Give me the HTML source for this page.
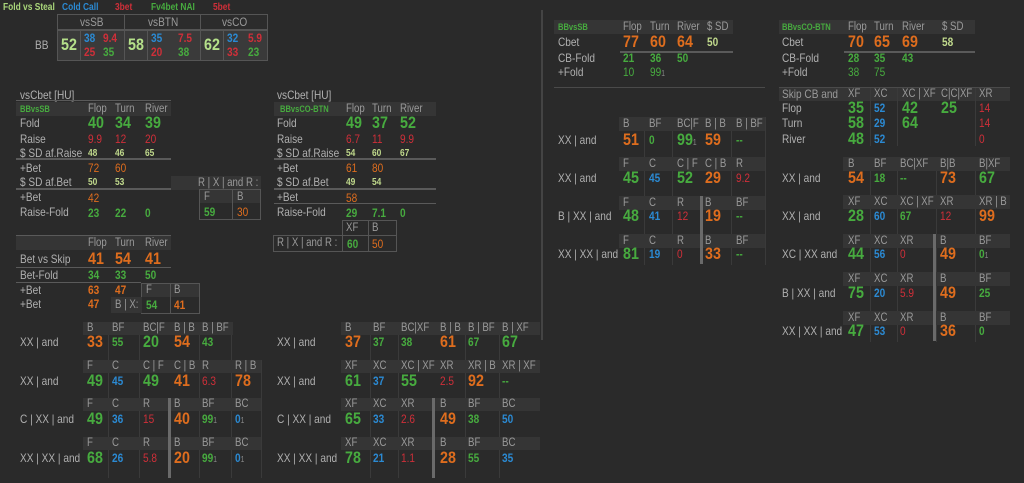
<!DOCTYPE html>
<html><head><meta charset="utf-8"><style>
body{margin:0;width:1024px;height:483px;background:#2a2a2a;overflow:hidden;position:relative;font-family:"Liberation Sans",sans-serif}
.a{position:absolute;white-space:nowrap;line-height:14px;transform:scaleX(.84);transform-origin:0 50%}
.L{font-size:12px;color:#b0b0b0}
.h{font-size:11.5px;color:#9a9a9a}
.B{font-size:17px;font-weight:bold;line-height:18px}
.S{font-size:12px;font-weight:bold}
.g{color:#47ab3f}.o{color:#de6d1e}.r{color:#cf2f39}.u{color:#2b8ad3}.y{color:#c0d98c}.w{color:#888}
.hb{position:absolute;background:#353535}
.ln{position:absolute;background:#5a5a5a;height:2px}
.vl{position:absolute;background:#3a3a3a;width:1px}
.bar{position:absolute;background:#6a6a6a;width:3px}
.bx{position:absolute;border:1px solid #555;box-sizing:border-box}
.tiny{font-size:8px;color:#888;font-weight:normal}
</style></head><body>

<!-- legend -->
<span class="a S y" style="left:3px;top:1px;font-size:10px;color:#a9d67a">Fold vs Steal</span>
<span class="a S u" style="left:62px;top:1px;font-size:10px">Cold Call</span>
<span class="a S r" style="left:115px;top:1px;font-size:10px">3bet</span>
<span class="a S g" style="left:151px;top:1px;font-size:10px">Fv4bet NAI</span>
<span class="a S r" style="left:213px;top:1px;font-size:10px">5bet</span>

<!-- top steal table -->
<div class="bx" style="left:57px;top:14px;width:68px;height:16px;background:#2c2c2c"></div>
<div class="bx" style="left:124px;top:14px;width:77px;height:16px;background:#2c2c2c"></div>
<div class="bx" style="left:200px;top:14px;width:68px;height:16px;background:#2c2c2c"></div>
<span class="a h" style="left:80px;top:15px;font-size:12px">vsSB</span>
<span class="a h" style="left:148px;top:15px;font-size:12px">vsBTN</span>
<span class="a h" style="left:222px;top:15px;font-size:12px">vsCO</span>
<div class="bx" style="left:57px;top:30px;width:24px;height:31px;background:#3a3a3a"></div>
<div class="bx" style="left:80px;top:30px;width:45px;height:31px;background:#3a3a3a"></div>
<div class="bx" style="left:124px;top:30px;width:24px;height:31px;background:#3a3a3a"></div>
<div class="bx" style="left:147px;top:30px;width:54px;height:31px;background:#3a3a3a"></div>
<div class="bx" style="left:200px;top:30px;width:24px;height:31px;background:#3a3a3a"></div>
<div class="bx" style="left:223px;top:30px;width:45px;height:31px;background:#3a3a3a"></div>
<span class="a L" style="left:35px;top:38px">BB</span>
<span class="a B" style="left:61px;top:36px;color:#b5e08a">52</span>
<span class="a S u" style="left:84px;top:31px">38</span><span class="a S r" style="left:103px;top:31px">9.4</span>
<span class="a S r" style="left:84px;top:45px">25</span><span class="a S g" style="left:103px;top:45px">35</span>
<span class="a B" style="left:128px;top:36px;color:#b5e08a">58</span>
<span class="a S u" style="left:151px;top:31px">35</span><span class="a S r" style="left:178px;top:31px">7.5</span>
<span class="a S r" style="left:151px;top:45px">20</span><span class="a S g" style="left:178px;top:45px">38</span>
<span class="a B" style="left:204px;top:36px;color:#b5e08a">62</span>
<span class="a S u" style="left:227px;top:31px">32</span><span class="a S r" style="left:248px;top:31px">5.9</span>
<span class="a S r" style="left:227px;top:45px">33</span><span class="a S g" style="left:248px;top:45px">23</span>

<!-- left vsCbet -->
<span class="a L" style="left:20px;top:88px">vsCbet [HU]</span>
<div class="hb" style="left:16px;top:102px;width:155px;height:14px"></div>
<div class="ln" style="left:16px;top:100px;width:155px;height:1px"></div>
<span class="a S g" style="left:20px;top:102px;font-size:9px">BBvsSB</span>
<span class="a h" style="left:88px;top:102px">Flop</span><span class="a h" style="left:115px;top:102px">Turn</span><span class="a h" style="left:145px;top:102px">River</span>
<span class="a L" style="left:20px;top:116px">Fold</span>
<span class="a B g" style="left:88px;top:114px">40</span><span class="a B g" style="left:115px;top:114px">34</span><span class="a B g" style="left:145px;top:114px">39</span>
<span class="a L" style="left:20px;top:132px">Raise</span>
<span class="a S r" style="left:88px;top:132px;font-weight:normal">9.9</span><span class="a S r" style="left:115px;top:132px;font-weight:normal">12</span><span class="a S r" style="left:145px;top:132px;font-weight:normal">20</span>
<span class="a L" style="left:20px;top:146px">$ SD af.Raise</span>
<span class="a S y" style="left:88px;top:147px;font-size:10px">48</span><span class="a S y" style="left:115px;top:147px;font-size:10px">46</span><span class="a S y" style="left:145px;top:147px;font-size:10px">65</span>
<div class="ln" style="left:16px;top:158px;width:155px"></div>
<span class="a L" style="left:20px;top:161px">+Bet</span>
<span class="a S o" style="left:88px;top:161px;font-weight:normal">72</span><span class="a S o" style="left:115px;top:161px;font-weight:normal">60</span>
<span class="a L" style="left:20px;top:175px">$ SD af.Bet</span>
<span class="a S y" style="left:88px;top:176px;font-size:10px">50</span><span class="a S y" style="left:115px;top:176px;font-size:10px">53</span>
<div class="ln" style="left:16px;top:188px;width:155px"></div>
<span class="a L" style="left:20px;top:190px">+Bet</span>
<span class="a S o" style="left:88px;top:191px;font-weight:normal">42</span>
<span class="a L" style="left:20px;top:205px">Raise-Fold</span>
<span class="a S g" style="left:88px;top:206px">23</span><span class="a S g" style="left:115px;top:206px">22</span><span class="a S g" style="left:145px;top:206px">0</span>
<div class="hb" style="left:171px;top:176px;width:90px;height:14px"></div>
<span class="a h" style="left:198px;top:176px">R | X | and R :</span>
<div class="bx" style="left:199px;top:189px;width:62px;height:31px"></div>
<div class="hb" style="left:200px;top:190px;width:60px;height:13px"></div>
<div class="vl" style="left:232px;top:190px;height:29px;background:#555"></div>
<span class="a h" style="left:204px;top:190px">F</span><span class="a h" style="left:237px;top:190px">B</span>
<span class="a S g" style="left:204px;top:205px">59</span><span class="a S o" style="left:237px;top:205px;font-weight:normal">30</span>

<!-- bet vs skip -->
<div class="ln" style="left:16px;top:235px;width:155px;height:1px"></div>
<div class="hb" style="left:16px;top:236px;width:155px;height:14px"></div>
<span class="a h" style="left:88px;top:236px">Flop</span><span class="a h" style="left:115px;top:236px">Turn</span><span class="a h" style="left:145px;top:236px">River</span>
<span class="a L" style="left:20px;top:252px">Bet vs Skip</span>
<span class="a B o" style="left:88px;top:250px">41</span><span class="a B o" style="left:115px;top:250px">54</span><span class="a B o" style="left:145px;top:250px">41</span>
<div class="ln" style="left:16px;top:267px;width:155px;height:1px"></div>
<span class="a L" style="left:20px;top:268px">Bet-Fold</span>
<span class="a S g" style="left:88px;top:268px">34</span><span class="a S g" style="left:115px;top:268px">33</span><span class="a S g" style="left:145px;top:268px">50</span>
<div class="ln" style="left:16px;top:282px;width:125px;height:1px"></div>
<span class="a L" style="left:20px;top:283px">+Bet</span>
<span class="a S o" style="left:88px;top:283px">63</span><span class="a S o" style="left:115px;top:283px">47</span>
<span class="a L" style="left:20px;top:297px">+Bet</span>
<span class="a S o" style="left:88px;top:297px">47</span>
<div class="bx" style="left:141px;top:283px;width:59px;height:31px"></div>
<div class="hb" style="left:142px;top:284px;width:57px;height:13px"></div>
<div class="vl" style="left:170px;top:284px;height:29px;background:#555"></div>
<span class="a h" style="left:146px;top:283px">F</span><span class="a h" style="left:174px;top:283px">B</span>
<div class="hb" style="left:111px;top:297px;width:31px;height:16px"></div>
<span class="a h" style="left:115px;top:298px">B | X:</span>
<span class="a S g" style="left:146px;top:298px">54</span><span class="a S o" style="left:174px;top:298px">41</span>

<!-- middle vsCbet -->
<span class="a L" style="left:277px;top:88px">vsCbet [HU]</span>
<div class="hb" style="left:274px;top:102px;width:162px;height:14px"></div>
<span class="a S g" style="left:280px;top:102px;font-size:9px">BBvsCO-BTN</span>
<span class="a h" style="left:346px;top:102px">Flop</span><span class="a h" style="left:372px;top:102px">Turn</span><span class="a h" style="left:400px;top:102px">River</span>
<span class="a L" style="left:277px;top:116px">Fold</span>
<span class="a B g" style="left:346px;top:114px">49</span><span class="a B g" style="left:372px;top:114px">37</span><span class="a B g" style="left:400px;top:114px">52</span>
<span class="a L" style="left:277px;top:132px">Raise</span>
<span class="a S r" style="left:346px;top:132px;font-weight:normal">6.7</span><span class="a S r" style="left:372px;top:132px;font-weight:normal">11</span><span class="a S r" style="left:400px;top:132px;font-weight:normal">9.9</span>
<span class="a L" style="left:277px;top:146px">$ SD af.Raise</span>
<span class="a S y" style="left:346px;top:147px;font-size:10px">54</span><span class="a S y" style="left:372px;top:147px;font-size:10px">60</span><span class="a S y" style="left:400px;top:147px;font-size:10px">67</span>
<div class="ln" style="left:274px;top:158px;width:162px"></div>
<span class="a L" style="left:277px;top:161px">+Bet</span>
<span class="a S o" style="left:346px;top:161px;font-weight:normal">61</span><span class="a S o" style="left:372px;top:161px;font-weight:normal">80</span>
<span class="a L" style="left:277px;top:175px">$ SD af.Bet</span>
<span class="a S y" style="left:346px;top:176px;font-size:10px">49</span><span class="a S y" style="left:372px;top:176px;font-size:10px">54</span>
<div class="ln" style="left:274px;top:188px;width:162px"></div>
<span class="a L" style="left:277px;top:190px">+Bet</span>
<span class="a S o" style="left:346px;top:191px;font-weight:normal">58</span>
<div class="ln" style="left:274px;top:203px;width:162px;height:1px"></div>
<span class="a L" style="left:277px;top:205px">Raise-Fold</span>
<span class="a S g" style="left:346px;top:206px">29</span><span class="a S g" style="left:372px;top:206px">7.1</span><span class="a S g" style="left:400px;top:206px">0</span>
<div class="bx" style="left:342px;top:220px;width:55px;height:32px"></div>
<div class="vl" style="left:368px;top:220px;height:32px;background:#555"></div>
<div class="ln" style="left:342px;top:235px;width:55px;height:1px;background:#555"></div>
<span class="a h" style="left:346px;top:221px">XF</span><span class="a h" style="left:372px;top:221px">B</span>
<div class="bx" style="left:273px;top:235px;width:70px;height:17px"></div>
<span class="a h" style="left:277px;top:236px">R | X | and R :</span>
<span class="a S g" style="left:347px;top:237px">60</span><span class="a S o" style="left:372px;top:237px;font-weight:normal">50</span>

<!-- divider -->
<div style="position:absolute;left:541px;top:10px;width:2px;height:330px;background:#444"></div>

<!-- LEFT GRID -->
<div class="vl" style="left:108px;top:322px;height:156px"></div><div class="vl" style="left:139px;top:322px;height:156px"></div><div class="vl" style="left:199px;top:322px;height:156px"></div><div class="vl" style="left:231px;top:322px;height:156px"></div><div class="vl" style="left:261px;top:360px;height:118px"></div>
<div class="hb" style="left:83px;top:322px;width:150px;height:13px"></div>
<div class="hb" style="left:83px;top:360px;width:178px;height:13px"></div>
<div class="hb" style="left:83px;top:398px;width:178px;height:13px"></div>
<div class="hb" style="left:83px;top:437px;width:178px;height:13px"></div>
<div class="bar" style="left:168px;top:398px;height:80px"></div>
<span class="a h" style="left:87px;top:321px">B</span><span class="a h" style="left:112px;top:321px">BF</span><span class="a h" style="left:143px;top:321px">BC|F</span><span class="a h" style="left:174px;top:321px">B | B</span><span class="a h" style="left:202px;top:321px">B | BF</span>
<span class="a L" style="left:20px;top:335px">XX | and</span>
<span class="a B o" style="left:87px;top:333px">33</span><span class="a S g" style="left:112px;top:335px">55</span><span class="a B g" style="left:143px;top:333px">20</span><span class="a B o" style="left:174px;top:333px">54</span><span class="a S g" style="left:202px;top:335px">43</span>
<span class="a h" style="left:87px;top:359px">F</span><span class="a h" style="left:112px;top:359px">C</span><span class="a h" style="left:143px;top:359px">C | F</span><span class="a h" style="left:174px;top:359px">C | B</span><span class="a h" style="left:202px;top:359px">R</span><span class="a h" style="left:235px;top:359px">R | B</span>
<span class="a L" style="left:20px;top:374px">XX | and</span>
<span class="a B g" style="left:87px;top:372px">49</span><span class="a S u" style="left:112px;top:374px">45</span><span class="a B g" style="left:143px;top:372px">49</span><span class="a B o" style="left:174px;top:372px">41</span><span class="a S r" style="left:202px;top:374px;font-weight:normal">6.3</span><span class="a B o" style="left:235px;top:372px">78</span>
<span class="a h" style="left:87px;top:397px">F</span><span class="a h" style="left:112px;top:397px">C</span><span class="a h" style="left:143px;top:397px">R</span><span class="a h" style="left:174px;top:397px">B</span><span class="a h" style="left:202px;top:397px">BF</span><span class="a h" style="left:235px;top:397px">BC</span>
<span class="a L" style="left:20px;top:412px">C | XX | and</span>
<span class="a B g" style="left:87px;top:410px">49</span><span class="a S u" style="left:112px;top:412px">36</span><span class="a S r" style="left:143px;top:412px;font-weight:normal">15</span><span class="a B o" style="left:174px;top:410px">40</span><span class="a S g" style="left:202px;top:412px">99<span class="tiny">1</span></span><span class="a S u" style="left:235px;top:412px">0<span class="tiny">1</span></span>
<span class="a h" style="left:87px;top:436px">F</span><span class="a h" style="left:112px;top:436px">C</span><span class="a h" style="left:143px;top:436px">R</span><span class="a h" style="left:174px;top:436px">B</span><span class="a h" style="left:202px;top:436px">BF</span><span class="a h" style="left:235px;top:436px">BC</span>
<span class="a L" style="left:20px;top:451px">XX | XX | and</span>
<span class="a B g" style="left:87px;top:449px">68</span><span class="a S u" style="left:112px;top:451px">26</span><span class="a S r" style="left:143px;top:451px;font-weight:normal">5.8</span><span class="a B o" style="left:174px;top:449px">20</span><span class="a S g" style="left:202px;top:451px">99<span class="tiny">1</span></span><span class="a S u" style="left:235px;top:451px">0<span class="tiny">1</span></span>

<!-- MIDDLE GRID -->
<div class="vl" style="left:370px;top:322px;height:156px"></div><div class="vl" style="left:398px;top:322px;height:156px"></div><div class="vl" style="left:465px;top:322px;height:156px"></div><div class="vl" style="left:499px;top:322px;height:156px"></div>
<div class="hb" style="left:341px;top:322px;width:199px;height:13px"></div>
<div class="hb" style="left:341px;top:360px;width:199px;height:13px"></div>
<div class="hb" style="left:341px;top:398px;width:199px;height:13px"></div>
<div class="hb" style="left:341px;top:437px;width:199px;height:13px"></div>
<div class="bar" style="left:432px;top:398px;height:80px"></div>
<span class="a h" style="left:345px;top:321px">B</span><span class="a h" style="left:373px;top:321px">BF</span><span class="a h" style="left:401px;top:321px">BC|XF</span><span class="a h" style="left:440px;top:321px">B | B</span><span class="a h" style="left:468px;top:321px">B | BF</span><span class="a h" style="left:502px;top:321px">B | XF</span>
<span class="a L" style="left:277px;top:335px">XX | and</span>
<span class="a B o" style="left:345px;top:333px">37</span><span class="a S g" style="left:373px;top:335px">37</span><span class="a S g" style="left:401px;top:335px">38</span><span class="a B o" style="left:440px;top:333px">61</span><span class="a S g" style="left:468px;top:335px">67</span><span class="a B g" style="left:502px;top:333px">67</span>
<span class="a h" style="left:345px;top:359px">XF</span><span class="a h" style="left:373px;top:359px">XC</span><span class="a h" style="left:401px;top:359px">XC | XF</span><span class="a h" style="left:440px;top:359px">XR</span><span class="a h" style="left:468px;top:359px">XR | B</span><span class="a h" style="left:502px;top:359px">XR | XF</span>
<span class="a L" style="left:277px;top:374px">XX | and</span>
<span class="a B g" style="left:345px;top:372px">61</span><span class="a S u" style="left:373px;top:374px">37</span><span class="a B g" style="left:401px;top:372px">55</span><span class="a S r" style="left:440px;top:374px;font-weight:normal">2.5</span><span class="a B o" style="left:468px;top:372px">92</span><span class="a S g" style="left:502px;top:374px">--</span>
<span class="a h" style="left:345px;top:397px">XF</span><span class="a h" style="left:373px;top:397px">XC</span><span class="a h" style="left:401px;top:397px">XR</span><span class="a h" style="left:440px;top:397px">B</span><span class="a h" style="left:468px;top:397px">BF</span><span class="a h" style="left:502px;top:397px">BC</span>
<span class="a L" style="left:277px;top:412px">C | XX | and</span>
<span class="a B g" style="left:345px;top:410px">65</span><span class="a S u" style="left:373px;top:412px">33</span><span class="a S r" style="left:401px;top:412px;font-weight:normal">2.6</span><span class="a B o" style="left:440px;top:410px">49</span><span class="a S g" style="left:468px;top:412px">38</span><span class="a S u" style="left:502px;top:412px">50</span>
<span class="a h" style="left:345px;top:436px">XF</span><span class="a h" style="left:373px;top:436px">XC</span><span class="a h" style="left:401px;top:436px">XR</span><span class="a h" style="left:440px;top:436px">B</span><span class="a h" style="left:468px;top:436px">BF</span><span class="a h" style="left:502px;top:436px">BC</span>
<span class="a L" style="left:277px;top:451px">XX | XX | and</span>
<span class="a B g" style="left:345px;top:449px">78</span><span class="a S u" style="left:373px;top:451px">21</span><span class="a S r" style="left:401px;top:451px;font-weight:normal">1.1</span><span class="a B o" style="left:440px;top:449px">28</span><span class="a S g" style="left:468px;top:451px">55</span><span class="a S u" style="left:502px;top:451px">35</span>

<!-- RIGHT 1 -->
<div class="hb" style="left:554px;top:20px;width:179px;height:14px"></div>
<span class="a S g" style="left:558px;top:20px;font-size:9px">BBvsSB</span>
<span class="a h" style="left:623px;top:20px">Flop</span><span class="a h" style="left:650px;top:20px">Turn</span><span class="a h" style="left:677px;top:20px">River</span><span class="a h" style="left:707px;top:20px">$ SD</span>
<span class="a L" style="left:558px;top:35px">Cbet</span>
<span class="a B o" style="left:623px;top:33px">77</span><span class="a B o" style="left:650px;top:33px">60</span><span class="a B o" style="left:677px;top:33px">64</span><span class="a S y" style="left:707px;top:35px">50</span>
<div class="ln" style="left:620px;top:51px;width:113px"></div>
<span class="a L" style="left:558px;top:51px">CB-Fold</span>
<span class="a S g" style="left:623px;top:51px">21</span><span class="a S g" style="left:650px;top:51px">36</span><span class="a S g" style="left:677px;top:51px">50</span>
<span class="a L" style="left:558px;top:65px">+Fold</span>
<span class="a S g" style="left:623px;top:65px;font-weight:normal">10</span><span class="a S g" style="left:650px;top:65px;font-weight:normal">99<span class="tiny">1</span></span>
<div class="ln" style="left:554px;top:87px;width:211px;height:1px;background:#4a4a4a"></div>

<div class="vl" style="left:644px;top:117px;height:148px"></div><div class="vl" style="left:672px;top:117px;height:148px"></div><div class="vl" style="left:731px;top:117px;height:148px"></div><div class="vl" style="left:765px;top:117px;height:148px"></div>
<div class="hb" style="left:619px;top:117px;width:146px;height:14px"></div>
<div class="hb" style="left:619px;top:157px;width:146px;height:14px"></div>
<div class="hb" style="left:619px;top:196px;width:146px;height:14px"></div>
<div class="hb" style="left:619px;top:234px;width:146px;height:14px"></div>
<div class="bar" style="left:700px;top:196px;height:68px"></div>
<span class="a h" style="left:623px;top:117px">B</span><span class="a h" style="left:649px;top:117px">BF</span><span class="a h" style="left:677px;top:117px">BC|F</span><span class="a h" style="left:705px;top:117px">B | B</span><span class="a h" style="left:736px;top:117px">B | BF</span>
<span class="a L" style="left:558px;top:133px">XX | and</span>
<span class="a B o" style="left:623px;top:131px">51</span><span class="a S g" style="left:649px;top:133px">0</span><span class="a B g" style="left:677px;top:131px">99<span class="tiny">1</span></span><span class="a B o" style="left:705px;top:131px">59</span><span class="a S g" style="left:736px;top:133px">--</span>
<span class="a h" style="left:623px;top:157px">F</span><span class="a h" style="left:649px;top:157px">C</span><span class="a h" style="left:677px;top:157px">C | F</span><span class="a h" style="left:705px;top:157px">C | B</span><span class="a h" style="left:736px;top:157px">R</span>
<span class="a L" style="left:558px;top:171px">XX | and</span>
<span class="a B g" style="left:623px;top:169px">45</span><span class="a S u" style="left:649px;top:171px">45</span><span class="a B g" style="left:677px;top:169px">52</span><span class="a B o" style="left:705px;top:169px">29</span><span class="a S r" style="left:736px;top:171px;font-weight:normal">9.2</span>
<span class="a h" style="left:623px;top:196px">F</span><span class="a h" style="left:649px;top:196px">C</span><span class="a h" style="left:677px;top:196px">R</span><span class="a h" style="left:705px;top:196px">B</span><span class="a h" style="left:736px;top:196px">BF</span>
<span class="a L" style="left:558px;top:209px">B | XX | and</span>
<span class="a B g" style="left:623px;top:207px">48</span><span class="a S u" style="left:649px;top:209px">41</span><span class="a S r" style="left:677px;top:209px;font-weight:normal">12</span><span class="a B o" style="left:705px;top:207px">19</span><span class="a S g" style="left:736px;top:209px">--</span>
<span class="a h" style="left:623px;top:234px">F</span><span class="a h" style="left:649px;top:234px">C</span><span class="a h" style="left:677px;top:234px">R</span><span class="a h" style="left:705px;top:234px">B</span><span class="a h" style="left:736px;top:234px">BF</span>
<span class="a L" style="left:558px;top:247px">XX | XX | and</span>
<span class="a B g" style="left:623px;top:245px">81</span><span class="a S u" style="left:649px;top:247px">19</span><span class="a S r" style="left:677px;top:247px;font-weight:normal">0</span><span class="a B o" style="left:705px;top:245px">33</span><span class="a S g" style="left:736px;top:247px">--</span>

<!-- RIGHT 2 -->
<div class="hb" style="left:779px;top:20px;width:196px;height:14px"></div>
<span class="a S g" style="left:782px;top:20px;font-size:9px">BBvsCO-BTN</span>
<span class="a h" style="left:848px;top:20px">Flop</span><span class="a h" style="left:874px;top:20px">Turn</span><span class="a h" style="left:902px;top:20px">River</span><span class="a h" style="left:942px;top:20px">$ SD</span>
<span class="a L" style="left:782px;top:35px">Cbet</span>
<span class="a B o" style="left:848px;top:33px">70</span><span class="a B o" style="left:874px;top:33px">65</span><span class="a B o" style="left:902px;top:33px">69</span><span class="a S y" style="left:942px;top:35px">58</span>
<div class="ln" style="left:844px;top:51px;width:131px"></div>
<span class="a L" style="left:782px;top:51px">CB-Fold</span>
<span class="a S g" style="left:848px;top:51px">28</span><span class="a S g" style="left:874px;top:51px">35</span><span class="a S g" style="left:902px;top:51px">43</span>
<span class="a L" style="left:782px;top:65px">+Fold</span>
<span class="a S g" style="left:848px;top:65px;font-weight:normal">38</span><span class="a S g" style="left:874px;top:65px;font-weight:normal">75</span>
<div class="ln" style="left:779px;top:87px;width:231px;height:1px;background:#4a4a4a"></div>
<div class="hb" style="left:779px;top:88px;width:231px;height:13px"></div>
<div class="vl" style="left:870px;top:88px;height:58px"></div><div class="vl" style="left:897px;top:88px;height:58px"></div><div class="vl" style="left:975px;top:88px;height:58px"></div>
<span class="a h" style="left:782px;top:87px;font-size:12px">Skip CB and</span>
<span class="a h" style="left:848px;top:87px">XF</span><span class="a h" style="left:874px;top:87px">XC</span><span class="a h" style="left:902px;top:87px">XC | XF</span><span class="a h" style="left:941px;top:87px">C|C|XF</span><span class="a h" style="left:979px;top:87px">XR</span>
<span class="a L" style="left:782px;top:101px">Flop</span>
<span class="a B g" style="left:848px;top:99px">35</span><span class="a S u" style="left:874px;top:101px">52</span><span class="a B g" style="left:902px;top:99px">42</span><span class="a B g" style="left:941px;top:99px">25</span><span class="a S r" style="left:979px;top:101px;font-weight:normal">14</span>
<span class="a L" style="left:782px;top:116px">Turn</span>
<span class="a B g" style="left:848px;top:114px">58</span><span class="a S u" style="left:874px;top:116px">29</span><span class="a B g" style="left:902px;top:114px">64</span><span class="a S r" style="left:979px;top:116px;font-weight:normal">14</span>
<span class="a L" style="left:782px;top:132px">River</span>
<span class="a B g" style="left:848px;top:130px">48</span><span class="a S u" style="left:874px;top:132px">52</span><span class="a S r" style="left:979px;top:132px;font-weight:normal">0</span>

<div class="vl" style="left:870px;top:157px;height:185px"></div><div class="vl" style="left:897px;top:157px;height:185px"></div><div class="vl" style="left:936px;top:157px;height:185px"></div><div class="vl" style="left:975px;top:157px;height:185px"></div>
<div class="hb" style="left:843px;top:157px;width:167px;height:14px"></div>
<div class="hb" style="left:843px;top:195px;width:167px;height:14px"></div>
<div class="hb" style="left:843px;top:234px;width:167px;height:14px"></div>
<div class="hb" style="left:843px;top:272px;width:167px;height:14px"></div>
<div class="hb" style="left:843px;top:311px;width:167px;height:14px"></div>
<div class="bar" style="left:933px;top:234px;height:107px"></div>
<span class="a h" style="left:848px;top:157px">B</span><span class="a h" style="left:874px;top:157px">BF</span><span class="a h" style="left:900px;top:157px">BC|XF</span><span class="a h" style="left:940px;top:157px">B|B</span><span class="a h" style="left:979px;top:157px">B|XF</span>
<span class="a L" style="left:782px;top:171px">XX | and</span>
<span class="a B o" style="left:848px;top:169px">54</span><span class="a S g" style="left:874px;top:171px">18</span><span class="a S g" style="left:900px;top:171px">--</span><span class="a B o" style="left:940px;top:169px">73</span><span class="a B g" style="left:979px;top:169px">67</span>
<span class="a h" style="left:848px;top:195px">XF</span><span class="a h" style="left:874px;top:195px">XC</span><span class="a h" style="left:900px;top:195px">XC | XF</span><span class="a h" style="left:940px;top:195px">XR</span><span class="a h" style="left:979px;top:195px">XR | B</span>
<span class="a L" style="left:782px;top:209px">XX | and</span>
<span class="a B g" style="left:848px;top:207px">28</span><span class="a S u" style="left:874px;top:209px">60</span><span class="a S g" style="left:900px;top:209px">67</span><span class="a S r" style="left:940px;top:209px;font-weight:normal">12</span><span class="a B o" style="left:979px;top:207px">99</span>
<span class="a h" style="left:848px;top:234px">XF</span><span class="a h" style="left:874px;top:234px">XC</span><span class="a h" style="left:900px;top:234px">XR</span><span class="a h" style="left:940px;top:234px">B</span><span class="a h" style="left:979px;top:234px">BF</span>
<span class="a L" style="left:782px;top:247px">XC | XX and</span>
<span class="a B g" style="left:848px;top:245px">44</span><span class="a S u" style="left:874px;top:247px">56</span><span class="a S r" style="left:900px;top:247px;font-weight:normal">0</span><span class="a B o" style="left:940px;top:245px">49</span><span class="a S g" style="left:979px;top:247px">0<span class="tiny">1</span></span>
<span class="a h" style="left:848px;top:272px">XF</span><span class="a h" style="left:874px;top:272px">XC</span><span class="a h" style="left:900px;top:272px">XR</span><span class="a h" style="left:940px;top:272px">B</span><span class="a h" style="left:979px;top:272px">BF</span>
<span class="a L" style="left:782px;top:286px">B | XX | and</span>
<span class="a B g" style="left:848px;top:284px">75</span><span class="a S u" style="left:874px;top:286px">20</span><span class="a S r" style="left:900px;top:286px;font-weight:normal">5.9</span><span class="a B o" style="left:940px;top:284px">49</span><span class="a S g" style="left:979px;top:286px">25</span>
<span class="a h" style="left:848px;top:311px">XF</span><span class="a h" style="left:874px;top:311px">XC</span><span class="a h" style="left:900px;top:311px">XR</span><span class="a h" style="left:940px;top:311px">B</span><span class="a h" style="left:979px;top:311px">BF</span>
<span class="a L" style="left:782px;top:324px">XX | XX | and</span>
<span class="a B g" style="left:848px;top:322px">47</span><span class="a S u" style="left:874px;top:324px">53</span><span class="a S r" style="left:900px;top:324px;font-weight:normal">0</span><span class="a B o" style="left:940px;top:322px">36</span><span class="a S g" style="left:979px;top:324px">0</span>

</body></html>
